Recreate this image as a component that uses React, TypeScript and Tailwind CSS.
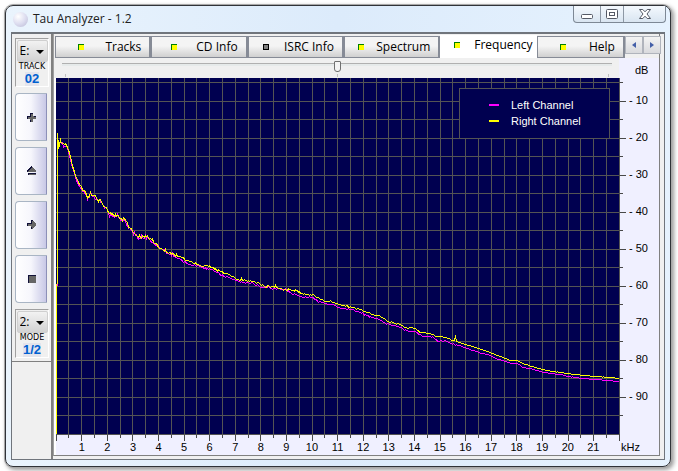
import React, { useState } from 'react';

type Point = [number, number];

const KHZ = Array.from({ length: 21 }, (_, i) => i + 1);
const DB = [10, 20, 30, 40, 50, 60, 70, 80, 90];

const TABS = [
    { name: 'Tracks', lit: true },
    { name: 'CD Info', lit: true },
    { name: 'ISRC Info', lit: false },
    { name: 'Spectrum', lit: true },
    { name: 'Frequency', lit: true },
    { name: 'Help', lit: true },
];

const PLOT_W = 563;
const PLOT_H = 356;

// Channel levels, in plot units
const START: Point[] = [
    [4, 62], [7, 66], [10, 65], [12, 72], [14, 79], [18, 95], [22, 105], [26, 111], [29, 114],
    [31, 118], [33, 118], [34, 113], [35, 117], [38, 118], [41, 121], [45, 123], [47, 127], [51, 131],
    [53, 136], [61, 137], [65, 141], [68, 140], [72, 148], [77, 154], [82, 158], [86, 158], [90, 157],
    [94, 160], [101, 167], [106, 171], [117, 176],
];

const RIGHT: Point[] = [
    ...START,
    [127, 180], [131, 182], [141, 186], [147, 188], [151, 186], [155, 189], [164, 193], [173, 196],
    [176, 198], [182, 201], [194, 202], [202, 205], [209, 208], [219, 208], [227, 211], [239, 212],
    [246, 215], [257, 217], [269, 223], [275, 223], [282, 226], [296, 229], [306, 232], [316, 236],
    [324, 238], [332, 243], [344, 246], [349, 249], [359, 250], [362, 253], [371, 255], [381, 258],
    [389, 259], [397, 262], [398, 262], [399, 257], [400, 263], [409, 266], [422, 270], [434, 274],
    [444, 278], [454, 282], [460, 282], [466, 285], [482, 290], [497, 293], [511, 295], [527, 297],
    [541, 298], [563, 300],
];

const LEFT: Point[] = [
    ...START.map(([x, y]): Point => [x, y + 1]),
    [127, 183], [135, 186], [141, 187], [147, 189], [155, 191], [164, 196], [169, 199], [172, 199],
    [181, 203], [196, 205], [204, 208], [217, 210], [229, 211], [236, 215], [246, 219], [256, 219],
    [262, 223], [272, 226], [277, 226], [284, 230], [294, 231], [302, 233], [312, 238], [322, 241],
    [329, 245], [341, 248], [352, 253], [359, 253], [364, 257], [376, 259], [382, 263], [389, 262],
    [394, 265], [399, 266], [411, 270], [422, 274], [432, 276], [441, 281], [447, 282], [454, 285],
    [461, 285], [466, 289], [474, 290], [487, 294], [504, 296], [511, 298], [527, 300], [551, 302],
    [563, 303],
];

function trace(points: Point[], seed: number) {
    let path = '';
    for (let i = 0; i < points.length - 1; i++) {
        const [x0, y0] = points[i];
        const [x1, y1] = points[i + 1];
        for (let x = x0; x < x1; x++) {
            const n = Math.sin(x * 12.9898 + seed) * 43758.5453;
            const noise = n - Math.floor(n) - 0.5;
            const size = x < 120 ? 3.4 : x < 240 ? 2 : x < 400 ? 1.2 : 0.4;
            const y = Math.round(y0 + ((y1 - y0) * (x - x0)) / (x1 - x0) + noise * size);
            path += `${path ? 'L' : 'M'}${x + 0.5} ${y + 0.5}`;
        }
    }
    return path;
}

function Chart() {
    const columns = Array.from({ length: 45 }, (_, i) => i);
    const rows = Array.from({ length: 20 }, (_, i) => i);

    return (
        <svg
            viewBox={`0 0 ${PLOT_W} ${PLOT_H}`}
            preserveAspectRatio="none"
            shapeRendering="crispEdges"
            fill="none"
            className="block h-[356px] w-full overflow-visible"
            role="img"
            aria-label="Frequency analysis"
        >
            <rect width={PLOT_W} height={PLOT_H} fill="#000050" />
            {columns.map((i) => {
                const x = Math.floor(i * 12.8) + 0.5;
                return (
                    <g key={i}>
                        {i > 0 && <path d={`M${x} 0V356`} stroke="#545454" />}
                        <path d={`M${x} 356v${i % 2 ? 4 : 7}`} stroke="#484848" />
                    </g>
                );
            })}
            {rows.map((i) => {
                const y = Math.floor(4.5 + i * 18.5) + 0.5;
                return (
                    <g key={i}>
                        <path d={`M0 ${y}H563`} stroke="#545454" />
                        {i < 19 && <path d={`M563 ${y}h${i % 2 ? 7 : 4}`} stroke="#484848" />}
                    </g>
                );
            })}
            <path d={trace(LEFT, 4)} stroke="#ff00ff" />
            <path d="M1.5 205v3" stroke="#ff00ff" />
            <path d={trace(RIGHT, 1)} stroke="#ffff00" />
            <path d="M0.5 206V356M1.5 55V206M2.5 62V71M3.5 64V69M4.5 60V65" stroke="#ffff00" />
        </svg>
    );
}

function Legend() {
    return (
        <div className="absolute top-[10px] right-[9px] flex h-[51px] w-[151px] flex-col justify-center border border-[#545454] bg-[#000050] pb-px pl-[29px] text-[11px] leading-4 text-white">
            <div className="flex items-center gap-3">
                <span className="h-[2px] w-[10px] bg-[#ff00ff]" />
                Left Channel
            </div>
            <div className="flex items-center gap-3">
                <span className="h-[2px] w-[10px] bg-[#ffff00]" />
                Right Channel
            </div>
        </div>
    );
}

function Lamp({ lit }: { lit: boolean }) {
    return (
        <span className="flex flex-1 justify-center">
            <span
                className={`h-[6px] w-[6px] border-t border-l ${lit ? 'border-[#008000] bg-[#ffff00]' : 'border-r border-b border-black bg-[#808080]'}`}
            />
        </span>
    );
}

function DriveBox({ label, option, caption, value }: { label: string; option: string; caption: string; value: string }) {
    return (
        <div className="flex h-[49px] w-[34px] flex-col items-center border border-[#a0a0a0] border-r-white border-b-white bg-[#f0f0f0]">
            <div className="relative mt-px">
                <select
                    aria-label={label}
                    className="block h-[22px] w-[31px] appearance-none rounded-[2px] border border-[#cfcfcf] bg-linear-to-b from-[#f2f2f2] to-[#d2d2d2] pl-[2px] text-[12px] leading-5 text-black"
                >
                    <option>{option}</option>
                </select>
                <svg viewBox="0 0 8 4" className="pointer-events-none absolute top-[10px] right-[4px] h-1 w-2">
                    <path d="M0 0h8L4 4z" fill="#000" />
                </svg>
            </div>
            <span className="font-['DejaVu_Sans',sans-serif] text-[8px] leading-[10px] text-black">{caption}</span>
            <span className="bg-[#e4e4ec] font-['Liberation_Sans',sans-serif] text-[13px] leading-[14px] font-bold text-[#0060d0]">
                {value}
            </span>
        </div>
    );
}

const ICONS = [
    { name: 'Play', path: 'M4 1h3v3h3v3H7v3H4V7H1V4h3z' },
    { name: 'Eject', path: 'M5 0h1v1h1v1h1v1h1v1h1v2H1V4h1V3h1V2h1V1h1zM2 7h8v2H2z' },
    { name: 'Next', path: 'M1 3h4V0h2v1h1v1h1v1h1v3H9v1H8v1H7v1H5V6H1z' },
    { name: 'Stop', path: 'M2 1h8v8H2z' },
];

function SideButton({ name, path }: { name: string; path: string }) {
    return (
        <button
            aria-label={name}
            className="flex h-12 w-8 items-center justify-center rounded-l-[4px] border border-[#a9b5c4] border-r-[#8c90b8] bg-linear-to-r from-white via-[#f6f6fc] to-[#c8c8e6]"
        >
            <svg viewBox="0 0 10 10" shapeRendering="crispEdges" className="h-[10px] w-[10px]">
                <path d={path} fill="#101038" />
                <path d={path} fill="#666666" transform="translate(1 1)" clipPath={`url(#clip-${name})`} />
                <clipPath id={`clip-${name}`}>
                    <path d={path} transform="translate(-1 -1)" />
                </clipPath>
            </svg>
        </button>
    );
}

function TitleBar() {
    return (
        <header className="flex h-[26px] items-start justify-between">
            <div className="flex h-[26px] items-center gap-[5px] pl-[7px]">
                <span className="h-[15px] w-[15px] rounded-full bg-[radial-gradient(circle_at_35%_30%,#ffffff,#dedef0_50%,#b8b8d4)]" />
                <h1 className="text-[12px] leading-4 text-[#202020]">Tau Analyzer - 1.2</h1>
            </div>
            <div className="mr-1 flex h-[17px] divide-x divide-[#8d98a5] overflow-hidden rounded-b-[4px] border border-t-0 border-[#7d8895] bg-linear-to-b from-[#f4f9fe] to-[#d9e5f1]">
                <button aria-label="Minimize" className="flex w-[27px] items-center justify-center">
                    <svg viewBox="0 0 12 5" className="mt-1 h-[5px] w-3">
                        <rect x=".5" y=".5" width="11" height="4" rx="1" fill="#fff" stroke="#555a66" />
                    </svg>
                </button>
                <button aria-label="Maximize" className="flex w-[23px] items-center justify-center">
                    <svg viewBox="0 0 12 10" className="h-[10px] w-3" fill="#fff" stroke="#555a66">
                        <rect x=".5" y=".5" width="11" height="9" rx="1" />
                        <rect x="3.5" y="3.5" width="5" height="3" />
                    </svg>
                </button>
                <button aria-label="Close" className="flex w-[41px] items-center justify-center">
                    <svg viewBox="0 0 12 10" className="h-[10px] w-3">
                        <path
                            d="M.5.5h3.3L6 2.8 8.2.5h3.3L8 5l3.5 4.5H8.2L6 7.2 3.8 9.5H.5L4 5z"
                            fill="#fff"
                            stroke="#555a66"
                        />
                    </svg>
                </button>
            </div>
        </header>
    );
}

function App() {
    const [active, setActive] = useState('Frequency');

    return (
        <div className="bg-white pt-[5px] pr-[7px] pb-1 pl-[5px] font-['Open_Sans','Segoe_UI',sans-serif] text-black">
            <div className="rounded-lg border border-[#303338] bg-linear-to-r from-[#eaf4fd] via-[#dcebfb] to-[#e6f2fe] pb-[6px] shadow-[0_0_0_1px_#a8a8a8,2px_2px_4px_1px_#9a9a9a]">
                <TitleBar />
                <div className="mx-[5px] flex border border-t-2 border-[#70757c] bg-[#f0f0f0]">
                    <aside className="w-[39px] shrink-0">
                        <div className="flex flex-col gap-[6px] border-b border-[#808080] pt-1 pb-[3px] pl-[3px]">
                            <DriveBox label="Drive" option="E:" caption="TRACK" value="02" />
                            {ICONS.map((icon) => (
                                <SideButton key={icon.name} {...icon} />
                            ))}
                            <DriveBox label="Mode" option="2:" caption="MODE" value="1/2" />
                        </div>
                    </aside>

                    <main className="min-w-0 grow border-l-2 border-[#808080] pr-1 pb-[3px]">
                        <div className="border-r border-b border-l border-[#808080] border-l-[#a0a0a0]">
                            <div className="flex h-6 items-end pl-px">
                                <div role="tablist" className="flex h-[22px] min-w-0 grow items-end">
                                    {TABS.map(({ name, lit }) => (
                                        <button
                                            key={name}
                                            role="tab"
                                            aria-selected={active === name}
                                            onClick={() => setActive(name)}
                                            className={`flex min-w-0 grow items-center text-[12px] ${name === 'Help' ? 'basis-[88px]' : 'basis-24'} ${active === name ? 'h-[23px] bg-white pr-1 pb-1' : 'h-[22px] border border-r-2 border-[#868b96] bg-linear-to-b from-[#f4f4f4] from-45% to-[#d0d0d0] pr-2'}`}
                                        >
                                            <Lamp lit={lit} />
                                            {name}
                                        </button>
                                    ))}
                                </div>
                                <div className="-mr-[2px] flex self-start pt-[2px]">
                                    {['left', 'right'].map((side) => (
                                        <button
                                            key={side}
                                            aria-label={`Scroll tabs ${side}`}
                                            className="flex h-[18px] w-[18px] items-center justify-center border border-[#b0b4bc] bg-linear-to-b from-[#f4f4f4] to-[#d9dadd]"
                                        >
                                            <svg viewBox="0 0 4 6" className="h-[6px] w-1" fill="#4560a8">
                                                <path d={side === 'left' ? 'M4 0v6L0 3z' : 'M0 0v6l4-3z'} />
                                            </svg>
                                        </button>
                                    ))}
                                </div>
                            </div>

                            <div className="flex">
                                <div className="h-5 min-w-0 grow bg-[#f0f0f0] pr-[7px] pl-2">
                                    <input
                                        type="range"
                                        aria-label="Position"
                                        defaultValue={50}
                                        className="block h-4 w-full appearance-none bg-[linear-gradient(#b0b0b0,#b0b0b0),linear-gradient(#e6eaea,#e6eaea)] bg-[length:100%_1px,100%_2px] bg-[position:0_5px,0_6px] bg-no-repeat [&::-webkit-slider-thumb]:h-[11px] [&::-webkit-slider-thumb]:w-[7px] [&::-webkit-slider-thumb]:appearance-none [&::-webkit-slider-thumb]:rounded-t-[1px] [&::-webkit-slider-thumb]:rounded-b-[3px] [&::-webkit-slider-thumb]:border [&::-webkit-slider-thumb]:border-[#707070] [&::-webkit-slider-thumb]:bg-[#f4f4f4]"
                                    />
                                    <div className="flex justify-between px-[3px]">
                                        <span className="h-[3px] w-px bg-[#c0c0c0]" />
                                        <span className="h-[3px] w-px bg-[#c0c0c0]" />
                                        <span className="h-[3px] w-px bg-[#c0c0c0]" />
                                    </div>
                                </div>
                                <div className="h-5 w-10 shrink-0 bg-[#f0f0ff] pl-4 font-['Liberation_Sans',sans-serif] text-[11px] leading-6">
                                    dB
                                </div>
                            </div>

                            <div className="flex bg-[#f0f0ff] font-['Liberation_Sans',sans-serif] text-[11px]">
                                <div className="min-w-0 grow border-l-2 border-white">
                                    <div className="relative">
                                        <Chart />
                                        <Legend />
                                    </div>
                                    <div className="flex h-[21px] px-[13px] pt-[7px] text-center leading-[13px]">
                                        {KHZ.map((k) => (
                                            <span key={k} className="min-w-0 flex-1">
                                                {k}
                                            </span>
                                        ))}
                                    </div>
                                </div>
                                <div className="flex w-10 shrink-0 flex-col justify-between pt-1">
                                    <div className="pl-[10px] leading-[37px]">
                                        {DB.map((d) => (
                                            <div key={d}>- {d}</div>
                                        ))}
                                    </div>
                                    <span className="pb-px pl-[2px] leading-[13px]">kHz</span>
                                </div>
                            </div>
                        </div>
                    </main>
                </div>
            </div>
        </div>
    );
}

export default App;
